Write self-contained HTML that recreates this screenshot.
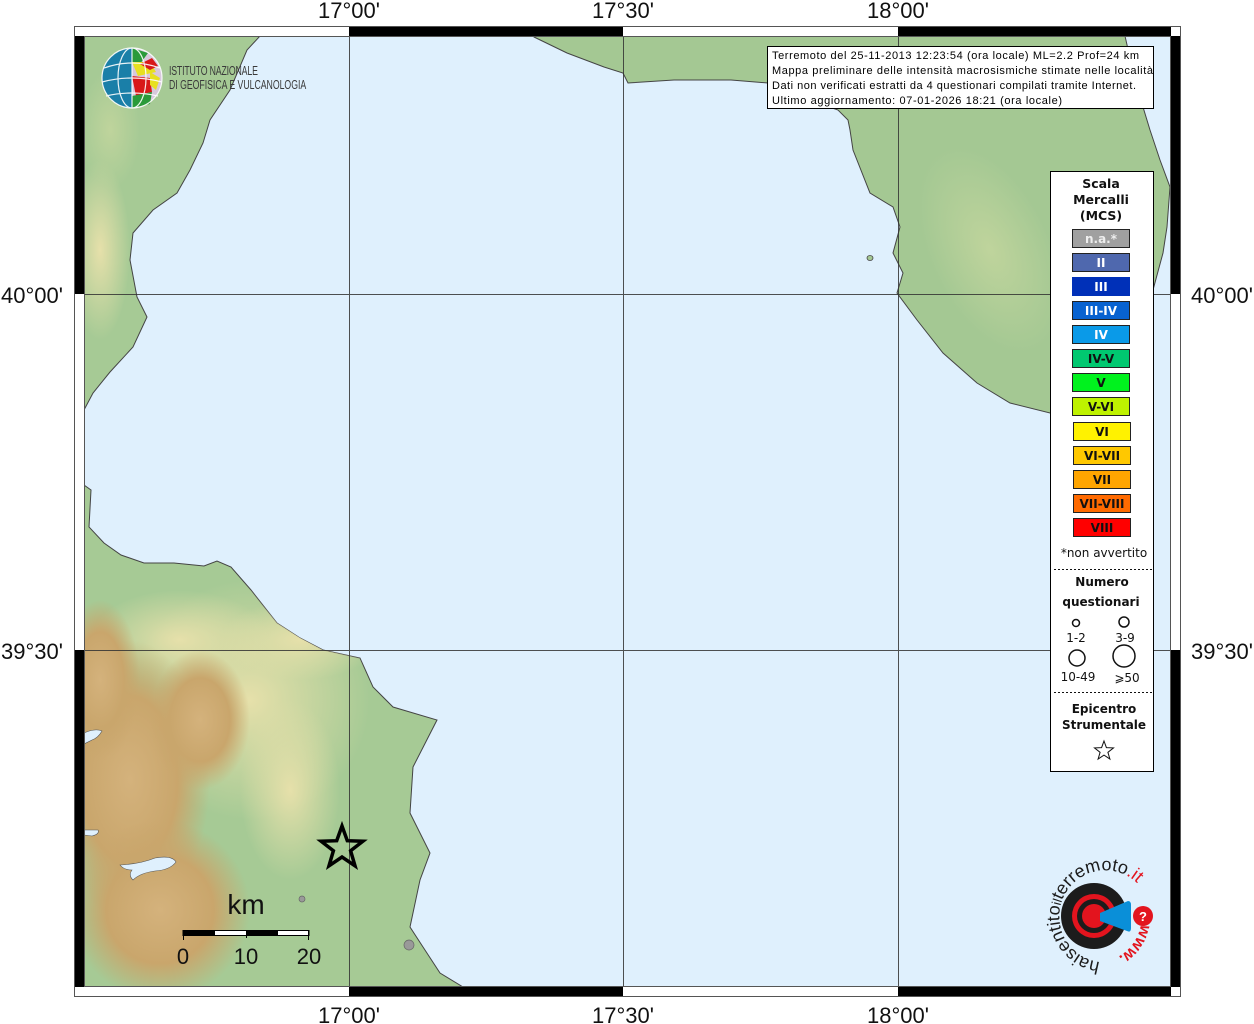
<!DOCTYPE html>
<html><head><meta charset="utf-8"><style>
html,body{margin:0;padding:0;background:#fff;}
svg{display:block;}
</style></head><body>
<svg width="1254" height="1024" viewBox="0 0 1254 1024" xmlns="http://www.w3.org/2000/svg">
<defs>
<clipPath id="mapclip"><rect x="84" y="36" width="1087" height="951"/></clipPath>
<radialGradient id="brown" cx="0.5" cy="0.5" r="0.5">
<stop offset="0" stop-color="#d4b27c"/><stop offset="0.6" stop-color="#c9a66c"/><stop offset="1" stop-color="#c9a66c" stop-opacity="0"/></radialGradient>
<radialGradient id="yel" cx="0.5" cy="0.5" r="0.5">
<stop offset="0" stop-color="#e6e0aa"/><stop offset="1" stop-color="#e6e0aa" stop-opacity="0"/></radialGradient>
<radialGradient id="yel2" cx="0.5" cy="0.5" r="0.5">
<stop offset="0" stop-color="#bfd49c"/><stop offset="1" stop-color="#bfd49c" stop-opacity="0"/></radialGradient>
<clipPath id="landSW"><path d="M84,485 L91,490 L89,527 L104,543 L121,555 L144,563 L174,563 L204,566 L217,561 L231,567 L251,590 L277,623 L300,638 L323,650 L360,658 L373,687 L393,707 L437,720 L413,767 L410,813 L430,853 L420,880 L410,927 L423,947 L440,973 L463,987 L84,987 Z"/></clipPath>
<clipPath id="landNW"><path d="M84,36 L260,36 L247,50 L230,90 L210,120 L203,143 L190,170 L177,193 L153,210 L133,233 L130,260 L137,297 L147,317 L133,347 L110,372 L93,393 L84,410 Z"/></clipPath>
</defs>
<rect x="84" y="36" width="1087" height="951" fill="#dff0fd"/>
<g clip-path="url(#mapclip)">
<path d="M84,36 L260,36 L247,50 L230,90 L210,120 L203,143 L190,170 L177,193 L153,210 L133,233 L130,260 L137,297 L147,317 L133,347 L110,372 L93,393 L84,410 Z" fill="#a6ca95" stroke="#444" stroke-width="1"/>
<g clip-path="url(#landNW)">
<ellipse cx="100" cy="250" rx="30" ry="90" fill="url(#yel)"/>
<ellipse cx="110" cy="130" rx="30" ry="60" fill="url(#yel2)"/>
</g>
<path d="M84,485 L91,490 L89,527 L104,543 L121,555 L144,563 L174,563 L204,566 L217,561 L231,567 L251,590 L277,623 L300,638 L323,650 L360,658 L373,687 L393,707 L437,720 L413,767 L410,813 L430,853 L420,880 L410,927 L423,947 L440,973 L463,987 L84,987 Z" fill="#a6ca95" stroke="#444" stroke-width="1"/>
<g clip-path="url(#landSW)">
<ellipse cx="250" cy="700" rx="120" ry="120" fill="url(#yel)"/>
<ellipse cx="300" cy="640" rx="80" ry="40" fill="url(#yel)"/>
<ellipse cx="180" cy="640" rx="90" ry="50" fill="url(#yel)"/>
<ellipse cx="130" cy="780" rx="80" ry="140" fill="url(#brown)"/>
<ellipse cx="160" cy="910" rx="90" ry="90" fill="url(#brown)"/>
<ellipse cx="200" cy="720" rx="50" ry="70" fill="url(#brown)"/>
<ellipse cx="100" cy="680" rx="40" ry="80" fill="url(#brown)"/>
<ellipse cx="290" cy="790" rx="50" ry="90" fill="url(#yel)"/>
</g>
<path d="M84,733 Q95,728 102,731 Q98,738 92,740 L84,744 Z" fill="#dff0fd" stroke="#555" stroke-width="0.6"/>
<path d="M84,830 L98,830 Q100,834 92,836 L84,835 Z" fill="#dff0fd" stroke="#555" stroke-width="0.6"/>
<path d="M120,865 Q140,864 155,858 Q172,855 176,862 Q170,870 155,871 Q140,873 133,880 Q128,875 132,870 Q124,870 120,865 Z" fill="#dff0fd" stroke="#555" stroke-width="0.6"/>
<path d="M534,36 L534,37 L567,53 L604,67 L623,73 L628,83 L674,80 L731,80 L768,83 L801,97 L838,110 L848,120 L850,130 L853,150 L870,193 L893,207 L900,227 L893,253 L903,273 L897,293 L917,320 L943,353 L977,383 L1010,403 L1050,413 L1140,380 L1153,290 L1163,253 L1167,227 L1170,187 L1160,160 L1150,130 L1143,107 L1135,80 L1125,36 Z" fill="#a4c893" stroke="#444" stroke-width="1"/>
<ellipse cx="990" cy="250" rx="60" ry="110" fill="url(#yel2)" transform="rotate(-25 990 250)"/>
<ellipse cx="870" cy="258" rx="3" ry="2.5" fill="#a4c893" stroke="#444" stroke-width="0.8"/>
</g>
<g stroke="#333" stroke-width="1" opacity="0.85">
<line x1="349.5" y1="36" x2="349.5" y2="987"/>
<line x1="623.5" y1="36" x2="623.5" y2="987"/>
<line x1="898.5" y1="36" x2="898.5" y2="987"/>
<line x1="84" y1="294.5" x2="1171" y2="294.5"/>
<line x1="84" y1="650.5" x2="1171" y2="650.5"/>
</g>
<rect x="74.5" y="26.5" width="1106" height="970" fill="none" stroke="#555" stroke-width="1"/>
<rect x="84.5" y="36.5" width="1086" height="950" fill="none" stroke="#555" stroke-width="1"/>
<g fill="#000">
<rect x="349" y="27" width="274" height="9"/>
<rect x="898" y="27" width="273" height="9"/>
<rect x="349" y="987" width="274" height="9"/>
<rect x="898" y="987" width="273" height="9"/>
<rect x="75" y="36" width="9" height="258"/>
<rect x="75" y="650" width="9" height="337"/>
<rect x="1171" y="36" width="9" height="258"/>
<rect x="1171" y="650" width="9" height="337"/>
</g>
<g font-family="Liberation Sans, sans-serif" font-size="22" fill="#111" text-anchor="middle">
<text x="349" y="18">17°00'</text>
<text x="623" y="18">17°30'</text>
<text x="898" y="18">18°00'</text>
<text x="349" y="1023">17°00'</text>
<text x="623" y="1023">17°30'</text>
<text x="898" y="1023">18°00'</text>
<text x="32" y="303">40°00'</text>
<text x="32" y="659">39°30'</text>
<text x="1222" y="303">40°00'</text>
<text x="1222" y="659">39°30'</text>
</g>
<g>
<circle cx="132" cy="78" r="30" fill="#1a7fa8"/>
<path d="M132,48 A30,30 0 0 1 132,108 Z" fill="#d8c8dc"/>
<path d="M132,48 L148,53 L140,64 L132,62 Z" fill="#2a9a3a"/>
<path d="M132,62 L150,62 L156,72 L138,76 Z" fill="#e8e020"/>
<path d="M140,64 L152,58 L158,66 L150,70 Z" fill="#d81818"/>
<path d="M132,76 L150,78 L152,92 L136,96 Z" fill="#d81818"/>
<path d="M150,72 L160,78 L156,90 L150,85 Z" fill="#e8e020"/>
<path d="M132,96 L152,92 L150,104 L132,108 Z" fill="#2a9a3a"/>
<g fill="none" stroke="#fff" stroke-width="1.2" opacity="0.9">
<circle cx="132" cy="78" r="30"/>
<ellipse cx="132" cy="78" rx="14" ry="30"/>
<line x1="132" y1="48" x2="132" y2="108"/>
<path d="M104,68 Q132,58 160,68"/><path d="M102,82 Q132,74 162,82"/><path d="M106,96 Q132,90 158,96"/>
</g>
<g font-family="Liberation Sans, sans-serif" font-size="12.5" fill="#3a3a3a" transform="translate(169,0) scale(0.7,1)">
<text x="0" y="75" textLength="127">ISTITUTO NAZIONALE</text>
<text x="0" y="89" textLength="196">DI GEOFISICA E VULCANOLOGIA</text>
</g>
</g>
<rect x="767.5" y="46.5" width="386" height="62" fill="#fff" stroke="#000" stroke-width="1"/>
<g font-family="Liberation Sans, sans-serif" font-size="11" fill="#000">
<text x="772" y="59" textLength="367">Terremoto del 25-11-2013 12:23:54 (ora locale) ML=2.2 Prof=24 km</text>
<text x="772" y="74" textLength="381">Mappa preliminare delle intensità macrosismiche stimate nelle località</text>
<text x="772" y="89" textLength="364">Dati non verificati estratti da 4 questionari compilati tramite Internet.</text>
<text x="772" y="104" textLength="290">Ultimo aggiornamento: 07-01-2026 18:21 (ora locale)</text>
</g>
<rect x="1050.5" y="171.5" width="103" height="600" fill="#fff" stroke="#000" stroke-width="1"/>
<g font-family="DejaVu Sans, sans-serif" font-size="12.5" font-weight="bold" fill="#111" text-anchor="middle">
<text x="1101" y="188">Scala</text>
<text x="1101" y="204">Mercalli</text>
<text x="1101" y="220">(MCS)</text>
</g>
<g stroke="#222" stroke-width="1" font-family="DejaVu Sans, sans-serif" font-size="12" font-weight="bold" text-anchor="middle">
<rect x="1072.5" y="229.5" width="57" height="18" fill="#a0a0a0"/><text x="1101" y="243" fill="#eee" stroke="none">n.a.*</text>
<rect x="1072.5" y="253.5" width="57" height="18" fill="#4f68ae"/><text x="1101" y="267" fill="#fff" stroke="none">II</text>
<rect x="1072.5" y="277.5" width="57" height="18" fill="#0030b8" stroke="#0030b8"/><text x="1101" y="291" fill="#fff" stroke="none">III</text>
<rect x="1072.5" y="301.5" width="57" height="18" fill="#0862d0"/><text x="1101" y="315" fill="#fff" stroke="none">III-IV</text>
<rect x="1072.5" y="325.5" width="57" height="18" fill="#0a9ae8"/><text x="1101" y="339" fill="#fff" stroke="none">IV</text>
<rect x="1072.5" y="349.5" width="57" height="18" fill="#00c870"/><text x="1101" y="363" fill="#111" stroke="none">IV-V</text>
<rect x="1072.5" y="373.5" width="57" height="18" fill="#00f21e"/><text x="1101" y="387" fill="#111" stroke="none">V</text>
<rect x="1072.5" y="397.5" width="57" height="18" fill="#bef200"/><text x="1101" y="411" fill="#111" stroke="none">V-VI</text>
<rect x="1073.5" y="422.5" width="57" height="18" fill="#fff200"/><text x="1102" y="436" fill="#111" stroke="none">VI</text>
<rect x="1073.5" y="446.5" width="57" height="18" fill="#ffc800"/><text x="1102" y="460" fill="#111" stroke="none">VI-VII</text>
<rect x="1073.5" y="470.5" width="57" height="18" fill="#ffa500"/><text x="1102" y="484" fill="#111" stroke="none">VII</text>
<rect x="1073.5" y="494.5" width="57" height="18" fill="#ff6a00"/><text x="1102" y="508" fill="#111" stroke="none">VII-VIII</text>
<rect x="1073.5" y="518.5" width="57" height="18" fill="#ff0000"/><text x="1102" y="532" fill="#111" stroke="none">VIII</text>
</g>
<g font-family="DejaVu Sans, sans-serif" font-size="12" fill="#111" text-anchor="middle">
<text x="1104" y="557">*non avvertito</text>
<line x1="1054" y1="569.5" x2="1152" y2="569.5" stroke="#111" stroke-dasharray="2,2"/>
<text x="1102" y="586" font-weight="bold">Numero</text>
<text x="1101" y="606" font-weight="bold">questionari</text>
<circle cx="1076" cy="623" r="3.5" fill="none" stroke="#111" stroke-width="1.5"/>
<circle cx="1124" cy="622" r="5" fill="none" stroke="#111" stroke-width="1.5"/>
<text x="1076" y="642">1-2</text>
<text x="1125" y="642">3-9</text>
<circle cx="1077" cy="658" r="8" fill="none" stroke="#111" stroke-width="1.5"/>
<circle cx="1124" cy="656" r="11" fill="none" stroke="#111" stroke-width="1.5"/>
<text x="1078" y="681">10-49</text>
<text x="1127" y="682">⩾50</text>
<line x1="1054" y1="692.5" x2="1152" y2="692.5" stroke="#111" stroke-dasharray="2,2"/>
<text x="1104" y="713" font-weight="bold">Epicentro</text>
<text x="1104" y="729" font-weight="bold">Strumentale</text>
<path d="M1104,741 L1106.4,747.6 L1113.5,747.9 L1107.9,752.3 L1109.9,759.1 L1104,755.1 L1098.1,759.1 L1100.1,752.3 L1094.5,747.9 L1101.6,747.6 Z" fill="none" stroke="#111" stroke-width="1"/>
</g>
<path d="M342,826 L347.3,840.7 L362.9,841.2 L350.6,850.8 L355,865.8 L342,857 L329,865.8 L333.4,850.8 L321.1,841.2 L336.7,840.7 Z" fill="none" stroke="#000" stroke-width="3.5"/>
<circle cx="302" cy="899" r="3" fill="#999" stroke="#666" stroke-width="0.7"/>
<circle cx="409" cy="945" r="5" fill="#999" stroke="#666" stroke-width="0.7"/>
<text x="246" y="914" font-family="Liberation Sans, sans-serif" font-size="28" text-anchor="middle" fill="#111">km</text>
<rect x="183" y="930.5" width="126" height="5" fill="#fff" stroke="#000" stroke-width="1"/>
<rect x="183" y="930.5" width="32" height="5" fill="#000"/>
<rect x="246" y="930.5" width="32" height="5" fill="#000"/>
<line x1="183.5" y1="930" x2="183.5" y2="940" stroke="#000"/>
<line x1="246.5" y1="930" x2="246.5" y2="938" stroke="#000"/>
<line x1="308.5" y1="930" x2="308.5" y2="940" stroke="#000"/>
<g font-family="Liberation Sans, sans-serif" font-size="22" fill="#111" text-anchor="middle">
<text x="183" y="964">0</text><text x="246" y="964">10</text><text x="309" y="964">20</text>
</g>
<g>
<defs><path id="arcT" d="M1100,962 A46,46 0 1 1 1139,885"/>
<path id="arcB" d="M1141,924 A46,46 0 0 1 1103,962"/></defs>
<circle cx="1094" cy="916" r="33" fill="#1c1c1c"/>
<circle cx="1094" cy="916" r="22" fill="#e3141e"/>
<circle cx="1094" cy="916" r="17" fill="#1c1c1c"/>
<circle cx="1094" cy="916" r="12" fill="#e3141e"/>
<path d="M1100,913 L1128,901 Q1131,901 1131,905 L1131,928 Q1131,933 1127,931 L1100,921 Z" fill="#0a8fd8"/>
<circle cx="1143" cy="916" r="10" fill="#e3141e"/>
<text x="1143" y="921" font-family="Liberation Sans, sans-serif" font-size="13" font-weight="bold" fill="#fff" text-anchor="middle">?</text>
<text font-family="Liberation Sans, sans-serif" font-size="18" fill="#1c1c1c"><textPath href="#arcT">hai<tspan>sentito</tspan><tspan font-size="13">il</tspan>terremoto<tspan fill="#e3141e">.it</tspan></textPath></text>
<text font-family="Liberation Sans, sans-serif" font-size="16" font-weight="bold" fill="#e3141e"><textPath href="#arcB">www.</textPath></text>
</g>
</svg>
</body></html>
